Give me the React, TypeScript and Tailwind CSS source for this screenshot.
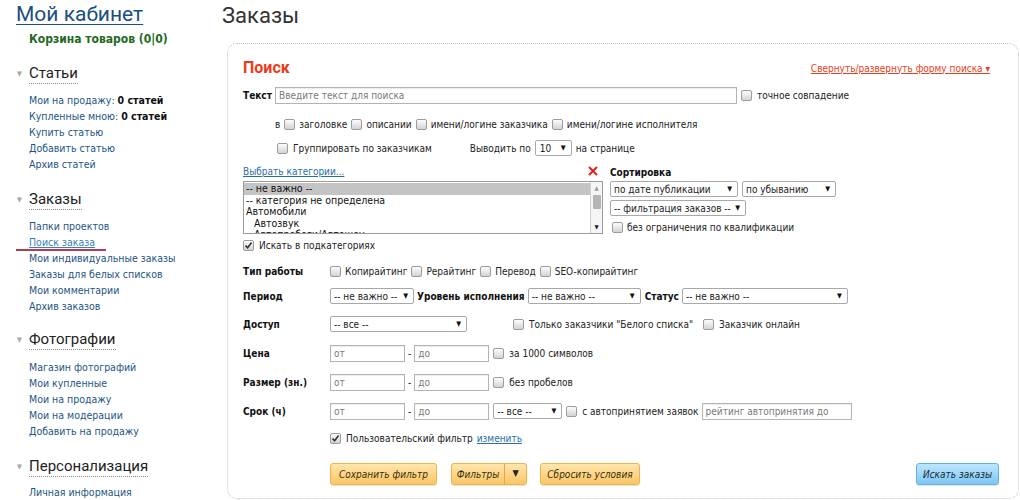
import React from "react";

function Cb({ checked = false, className = "" }: { checked?: boolean; className?: string }) {
  return (
    <span
      className={`inline-flex h-[11px] w-[11px] shrink-0 items-center justify-center rounded-[2px] border border-[#9c9c9c] bg-linear-to-b from-[#fdfdfd] to-[#d3d3d3] ${className}`}
    >
      {checked && (
        <svg width="9" height="9" viewBox="0 0 9 9">
          <path d="M1.5 4.6 L3.6 6.8 L7.6 1.6" stroke="#333" strokeWidth="1.6" fill="none" />
        </svg>
      )}
    </span>
  );
}

function Sel({ text, className = "" }: { text: string; className?: string }) {
  return (
    <div
      className={`flex h-[16px] shrink-0 items-center justify-between rounded-[2px] border border-[#a8a8a8] bg-white pl-[3px] pr-[5px] text-[#222] ${className}`}
    >
      <span className="whitespace-nowrap">{text}</span>
      <span className="text-[7px] text-[#111]">▼</span>
    </div>
  );
}

function Inp({ ph, className = "" }: { ph: string; className?: string }) {
  return (
    <div
      className={`flex h-[17px] shrink-0 items-center border border-[#b3b3b3] bg-white px-[3px] text-[#7a7a7a] shadow-[inset_0_1px_1px_rgba(0,0,0,0.08)] ${className}`}
    >
      {ph}
    </div>
  );
}

function Label({ children }: { children: React.ReactNode }) {
  return <div className="w-[87px] shrink-0 font-bold text-[#111]">{children}</div>;
}

function SideSection({
  title,
  items,
  mt,
  imt,
}: {
  title: string;
  items: React.ReactNode[];
  mt: string;
  imt: string;
}) {
  return (
    <div className={mt}>
      <div className="flex h-[20px] items-center">
        <span className="ml-[17px] w-[12px] text-[7px] text-[#a8a8a8]">▼</span>
        <span className="border-b border-dotted border-[#888] font-['Roboto',sans-serif] text-[15px] leading-[19px] text-[#222]">
          {title}
        </span>
      </div>
      <div className={`${imt} ml-[29px] flex flex-col text-[10.5px] leading-[16px] text-[#1d5585]`}>
        {items.map((it, i) => (
          <div key={i} className="h-[16px] whitespace-nowrap">
            {it}
          </div>
        ))}
      </div>
    </div>
  );
}

function Sidebar() {
  return (
    <aside className="flex w-[222px] shrink-0 flex-col">
      <div className="ml-[16px] h-[28px] font-['Roboto',sans-serif] text-[21px] leading-[28px] text-[#1b4e80] underline decoration-1 underline-offset-[3px]">
        Мой кабинет
      </div>
      <div className="ml-[29px] mt-[3px] h-[16px] text-[12px] font-bold leading-[16px] text-[#23691f]">
        Корзина товаров (0|0)
      </div>
      <SideSection
        title="Статьи"
        mt="mt-[17px]"
        imt="mt-[8px]"
        items={[
          <>
            Мои на продажу: <b className="text-[#111]">0 статей</b>
          </>,
          <>
            Купленные мною: <b className="text-[#111]">0 статей</b>
          </>,
          "Купить статью",
          "Добавить статью",
          "Архив статей",
        ]}
      />
      <SideSection
        title="Заказы"
        mt="mt-[18px]"
        imt="mt-[8px]"
        items={[
          "Папки проектов",
          <span className="relative inline-block">
            <span className="text-[#3a7fb8] underline">Поиск заказа</span>
            <span className="absolute left-[-13px] top-[15px] h-[1.5px] w-[90px] bg-[#b23a55]" />
          </span>,
          "Мои индивидуальные заказы",
          "Заказы для белых списков",
          "Мои комментарии",
          "Архив заказов",
        ]}
      />
      <SideSection
        title="Фотографии"
        mt="mt-[16px]"
        imt="mt-[9px]"
        items={["Магазин фотографий", "Мои купленные", "Мои на продажу", "Мои на модерации", "Добавить на продажу"]}
      />
      <SideSection title="Персонализация" mt="mt-[18px]" imt="mt-[7px]" items={["Личная информация"]} />
    </aside>
  );
}

function Listbox() {
  const items: [string, boolean, boolean][] = [
    ["-- не важно --", true, false],
    ["-- категория не определена", false, false],
    ["Автомобили", false, false],
    ["Автозвук", false, true],
    ["Автопробеги/Автошоу", false, true],
  ];
  return (
    <div className="mt-[3px] flex h-[53px] w-[360px] overflow-hidden border border-[#9c9c9c] bg-white">
      <div className="flex-1 overflow-hidden pt-px">
        {items.map(([t, sel, ind], i) => (
          <div
            key={i}
            className={`h-[11.5px] whitespace-nowrap text-[10.5px] leading-[11.5px] text-[#111] ${sel ? "bg-[#c4c4c4]" : ""} ${ind ? "pl-[10px]" : "pl-[2px]"}`}
          >
            {t}
          </div>
        ))}
      </div>
      <div className="relative flex w-[12px] flex-col items-center border-l border-[#d0d0d0] bg-[#f5f5f5]">
        <span className="mt-[3px] text-[6px] leading-[6px] text-[#999]">▲</span>
        <span className="mt-[4px] h-[14px] w-[8px] rounded-[1px] bg-[#b5b5b5]" />
        <span className="mt-auto mb-[3px] text-[6px] leading-[6px] text-[#222]">▼</span>
      </div>
    </div>
  );
}

function Btn({ children, className = "" }: { children: React.ReactNode; className?: string }) {
  return (
    <div
      className={`flex h-[22px] items-center justify-center rounded-[3px] border border-[#efb24a] bg-linear-to-b from-[#ffe6ad] to-[#fcc660] text-[10px] italic text-[#3a2d0c] shadow-[0_1px_1px_rgba(0,0,0,0.12)] ${className}`}
    >
      {children}
    </div>
  );
}

function Main() {
  return (
    <main className="flex flex-1 flex-col">
      <h1 className="h-[30px] pt-[2px] font-['Roboto',sans-serif] text-[22px] leading-[28px] text-[#333]">Заказы</h1>
      <div className="ml-[5px] mt-[13px] h-[456px] w-[792px] rounded-[10px] border border-dotted border-[#c2c2c2] px-[15px] pt-[14px]">
        {/* Поиск */}
        <div className="flex h-[20px] items-center justify-between">
          <span className="font-['Roboto',sans-serif] text-[16px] font-bold text-[#ee3a1c]">Поиск</span>
          <span className="mr-[13px] text-[10px] text-[#e8401a] underline">Свернуть/развернуть форму поиска ▾</span>
        </div>
        {/* Текст */}
        <div className="mt-[8px] flex h-[18px] items-center">
          <span className="w-[32px] font-bold text-[#111]">Текст</span>
          <Inp ph="Введите текст для поиска" className="w-[462px]" />
          <Cb className="ml-[4px]" />
          <span className="ml-[5px]">точное совпадение</span>
        </div>
        {/* в ... */}
        <div className="mt-[11px] flex h-[18px] items-center gap-[4px] pl-[32px]">
          <span>в</span>
          <Cb />
          <span>заголовке</span>
          <Cb />
          <span>описании</span>
          <Cb />
          <span>имени/логине заказчика</span>
          <Cb />
          <span>имени/логине исполнителя</span>
        </div>
        {/* Группировать */}
        <div className="mt-[6px] flex h-[18px] items-center pl-[34px]">
          <Cb />
          <span className="ml-[5px]">Группировать по заказчикам</span>
          <span className="ml-[38px]">Выводить по</span>
          <Sel text="10" className="ml-[4px] w-[37px] pl-[4px]" />
          <span className="ml-[4px]">на странице</span>
        </div>
        {/* Категории + сортировка */}
        <div className="mt-[7px] flex">
          <div className="w-[360px]">
            <div className="flex h-[14px] items-center justify-between">
              <span className="text-[#2b6ea6] underline">Выбрать категории...</span>
              <svg width="10" height="10" viewBox="0 0 10 10" className="mr-[5px]">
                <path d="M1 1 L9 9 M9 1 L1 9" stroke="#e41f1f" strokeWidth="2" />
              </svg>
            </div>
            <Listbox />
            <div className="mt-[4px] flex h-[14px] items-center">
              <Cb checked />
              <span className="ml-[5px]">Искать в подкатегориях</span>
            </div>
          </div>
          <div className="ml-[7px] flex flex-col">
            <div className="mt-[2px] h-[14px] font-bold leading-[14px] text-[#111]">Сортировка</div>
            <div className="mt-[1px] flex gap-[4px]">
              <Sel text="по дате публикации" className="h-[15px] w-[128px]" />
              <Sel text="по убыванию" className="h-[15px] w-[94px]" />
            </div>
            <Sel text="-- фильтрация заказов --" className="mt-[3px] h-[15px] w-[136px]" />
            <div className="mt-[4px] flex h-[14px] items-center pl-[2px]">
              <Cb />
              <span className="ml-[4px]">без ограничения по квалификации</span>
            </div>
          </div>
        </div>
        {/* Тип работы */}
        <div className="mt-[10px] flex h-[18px] items-center">
          <Label>Тип работы</Label>
          <div className="flex items-center gap-[4px]">
            <Cb />
            <span>Копирайтинг</span>
            <Cb />
            <span>Рерайтинг</span>
            <Cb />
            <span>Перевод</span>
            <Cb />
            <span>SEO-копирайтинг</span>
          </div>
        </div>
        {/* Период */}
        <div className="mt-[7px] flex h-[18px] items-center">
          <Label>Период</Label>
          <Sel text="-- не важно --" className="w-[84px]" />
          <span className="ml-[3px] font-bold text-[#111]">Уровень исполнения</span>
          <Sel text="-- не важно --" className="ml-[3px] w-[113px]" />
          <span className="ml-[4px] font-bold text-[#111]">Статус</span>
          <Sel text="-- не важно --" className="ml-[3px] w-[166px]" />
        </div>
        {/* Доступ */}
        <div className="mt-[10px] flex h-[18px] items-center">
          <Label>Доступ</Label>
          <Sel text="-- все --" className="w-[137px]" />
          <Cb className="ml-[46px]" />
          <span className="ml-[5px]">Только заказчики "Белого списка"</span>
          <Cb className="ml-[10px]" />
          <span className="ml-[5px]">Заказчик онлайн</span>
        </div>
        {/* Цена */}
        <div className="mt-[11px] flex h-[18px] items-center">
          <Label>Цена</Label>
          <Inp ph="от" className="w-[75px]" />
          <span className="mx-[3px]">-</span>
          <Inp ph="до" className="w-[75px]" />
          <Cb className="ml-[4px]" />
          <span className="ml-[5px]">за 1000 символов</span>
        </div>
        {/* Размер */}
        <div className="mt-[11px] flex h-[18px] items-center">
          <Label>Размер (зн.)</Label>
          <Inp ph="от" className="w-[75px]" />
          <span className="mx-[3px]">-</span>
          <Inp ph="до" className="w-[75px]" />
          <Cb className="ml-[4px]" />
          <span className="ml-[5px]">без пробелов</span>
        </div>
        {/* Срок */}
        <div className="mt-[11px] flex h-[18px] items-center">
          <Label>Срок (ч)</Label>
          <Inp ph="от" className="w-[75px]" />
          <span className="mx-[3px]">-</span>
          <Inp ph="до" className="w-[75px]" />
          <Sel text="-- все --" className="ml-[4px] w-[69px]" />
          <Cb className="ml-[4px]" />
          <span className="ml-[5px]">с автопринятием заявок</span>
          <Inp ph="рейтинг автопринятия до" className="ml-[3px] w-[150px]" />
        </div>
        {/* Пользовательский фильтр */}
        <div className="mt-[9px] flex h-[18px] items-center pl-[87px]">
          <Cb checked />
          <span className="ml-[5px]">Пользовательский фильтр</span>
          <span className="ml-[4px] text-[#2b6ea6] underline">изменить</span>
        </div>
        {/* Кнопки */}
        <div className="mt-[16px] flex items-center pl-[87px] pr-[4px]">
          <Btn className="w-[107px]">Сохранить фильтр</Btn>
          <Btn className="ml-[14px] w-[76px] justify-start">
            <span className="w-[52px] text-center">Фильтры</span>
            <span className="h-full border-l border-[#e5a840]" />
            <span className="flex-1 text-center text-[9px] not-italic text-[#222]">▼</span>
          </Btn>
          <Btn className="ml-[13px] w-[100px]">Сбросить условия</Btn>
          <div className="ml-auto flex h-[22px] w-[83px] items-center justify-center rounded-[3px] border border-[#62b3e4] bg-linear-to-b from-[#bce7fd] to-[#7dc6f2] text-[10px] italic text-[#1b2a36] shadow-[0_1px_1px_rgba(0,0,0,0.12)]">
            Искать заказы
          </div>
        </div>
      </div>
    </main>
  );
}

export default function App() {
  return (
    <div className="flex h-[500px] w-[1020px] overflow-hidden bg-white font-['DejaVu_Sans_Condensed','DejaVu_Sans',sans-serif] text-[10px] text-[#222]">
      <Sidebar />
      <Main />
    </div>
  );
}
